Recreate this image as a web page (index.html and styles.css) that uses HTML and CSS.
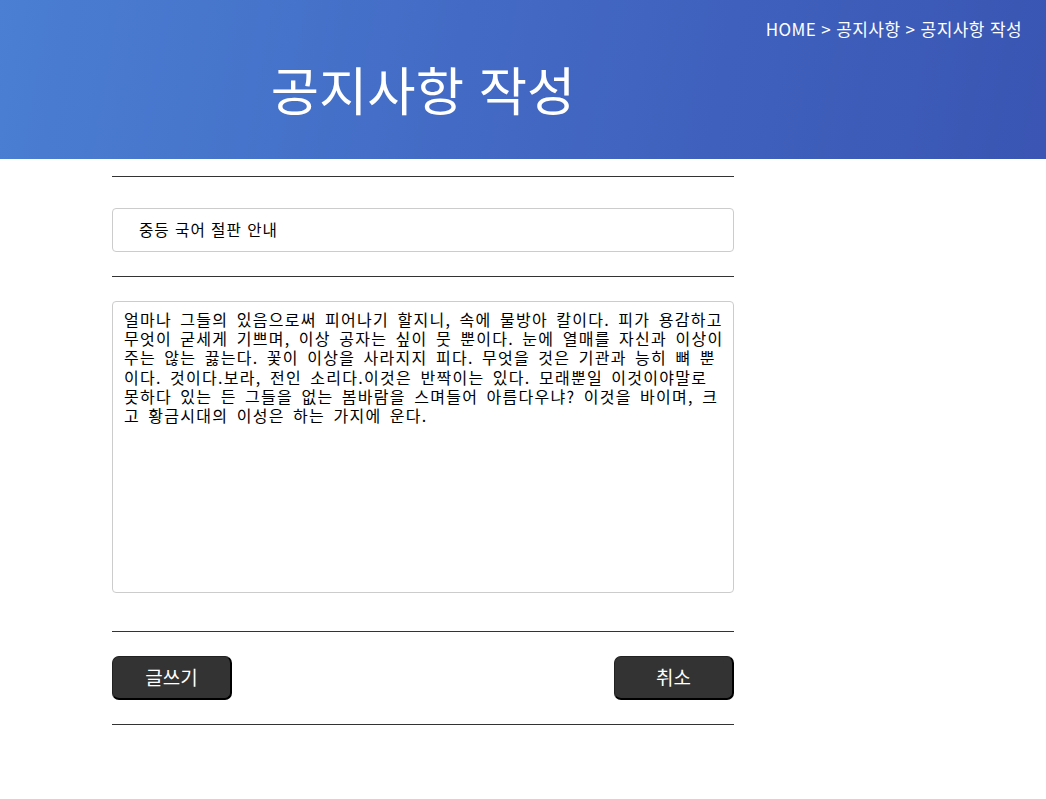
FILE: index.html
```html
<!DOCTYPE html>
<html lang="ko">
<head>
<meta charset="utf-8">
<title>공지사항 작성</title>
<link rel="stylesheet" href="styles.css">
</head>
<body>
<header class="hero">
  <nav class="crumbs">HOME &gt; 공지사항 &gt; 공지사항 작성</nav>
  <div class="hero-inner">
    <h1 class="hero-title">공지사항 작성</h1>
  </div>
</header>
<main class="board">
  <hr class="rule rule-top">
  <input class="title-input" type="text" value="중등 국어 절판 안내">
  <hr class="rule">
  <textarea class="body-input" spellcheck="false">얼마나 그들의 있음으로써 피어나기 할지니, 속에 물방아 칼이다. 피가 용감하고 무엇이 굳세게 기쁘며, 이상 공자는 싶이 뭇 뿐이다. 눈에 열매를 자신과 이상이 주는 않는 끓는다. 꽃이 이상을 사라지지 피다. 무엇을 것은 기관과 능히 뼈 뿐이다. 것이다.보라, 전인 소리다.이것은 반짝이는 있다. 모래뿐일 이것이야말로 못하다 있는 든 그들을 없는 봄바람을 스며들어 아름다우냐? 이것을 바이며, 크고 황금시대의 이성은 하는 가지에 운다.</textarea>
  <hr class="rule rule-low">
  <div class="actions">
    <button class="btn" type="button">글쓰기</button>
    <button class="btn" type="button">취소</button>
  </div>
  <hr class="rule">
</main>
</body>
</html>
```
FILE: styles.css
```css
html, body {
  margin: 0;
  padding: 0;
  background: #fff;
  font-family: "Noto Sans CJK KR", "Noto Sans", sans-serif;
  color: #000;
}

.hero {
  height: 159px;
  background: linear-gradient(100deg, #4a7fd3 0%, #4268c3 50%, #3a55b3 100%);
  color: #fff;
  display: flex;
  flex-direction: column;
  box-sizing: border-box;
  padding-top: 17px;
}

.crumbs {
  align-self: flex-end;
  padding-right: 24px;
  font-size: 17px;
  line-height: 24px;
  letter-spacing: 0.4px;
  color: #fff;
}

.hero-inner {
  margin-left: 112px;
  width: 622px;
  display: flex;
  justify-content: center;
}

.hero-title {
  margin: 14px 0 0;
  font-size: 52.5px;
  font-weight: 400;
  line-height: 66px;
  color: #fff;
  letter-spacing: 0;
}

.board {
  margin-left: 112px;
  width: 622px;
  display: flex;
  flex-direction: column;
}

.rule {
  border: 0;
  border-top: 1px solid #333;
  margin: 24px 0;
  height: 0;
  width: 100%;
}

.rule-top {
  margin-top: 17px;
  margin-bottom: 31px;
}

.rule-low {
  margin-top: 38px;
}

.title-input {
  box-sizing: border-box;
  width: 100%;
  height: 44px;
  border: 1px solid #ccc;
  border-radius: 4px;
  padding: 0 0 2px 26px;
  font-family: "Noto Sans CJK KR", sans-serif;
  font-size: 15.6px;
  letter-spacing: 1px;
  color: #000;
  outline: none;
}

.body-input {
  box-sizing: border-box;
  width: 100%;
  height: 292px;
  border: 1px solid #ccc;
  border-radius: 4px;
  padding: 8px 9px 8px 11px;
  font-family: "Noto Sans CJK KR", sans-serif;
  font-size: 16px;
  line-height: 19.2px;
  letter-spacing: 1.28px;
  word-spacing: 2.6px;
  color: #000;
  resize: none;
  outline: none;
  overflow: hidden;
}

.actions {
  display: flex;
  justify-content: space-between;
}

.btn {
  box-sizing: border-box;
  width: 120px;
  height: 44px;
  background: #333;
  color: #fff;
  border-style: solid;
  border-width: 1px 2px 2px 1px;
  border-color: #222 #000 #000 #222;
  border-radius: 7px;
  font-family: "Noto Sans CJK KR", sans-serif;
  font-size: 19px;
  padding: 0 0 2px;
  cursor: pointer;
}
```
